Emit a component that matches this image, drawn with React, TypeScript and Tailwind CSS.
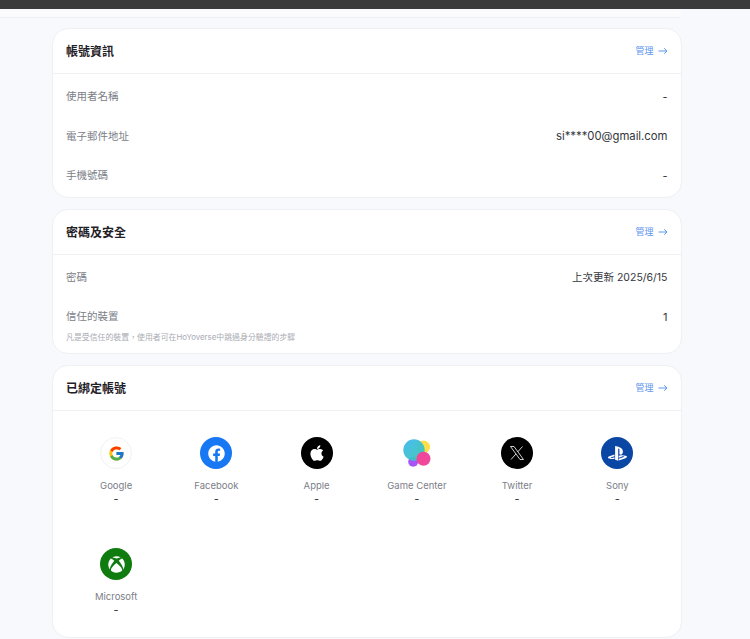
import { FaApple, FaFacebook, FaPlaystation, FaXbox } from "react-icons/fa";
import { FcGoogle } from "react-icons/fc";

function CardHeader({ title }: { title: string }) {
  return (
    <div className="flex h-[45px] items-center justify-between border-b border-[#eef0f4] pl-[13px] pr-[13.5px] pt-[2px]">
      <h2 className="text-[12px] font-bold text-[#1f2126]">{title}</h2>
      <a className="flex -translate-y-[1px] items-center gap-[4px] text-[9px] text-[#5f96ee]">
        管理
        <svg width="10" height="8" viewBox="0 0 10 8" fill="none" stroke="currentColor" strokeWidth="1">
          <path d="M0.5 4H9M6.2 1.3L9 4L6.2 6.7" />
        </svg>
      </a>
    </div>
  );
}

function Row({ label, value, size, hint }: { label: string; value: string; size?: string; hint?: string }) {
  return (
    <div className="pl-[13px] pr-[13.5px]">
      <div className="flex h-[20px] items-center justify-between">
        <span className="text-[10.5px] text-[#7b7e87]">{label}</span>
        <span className={`text-[#33363d] ${size ?? "text-[11px]"}`}>{value}</span>
      </div>
      {hint && <p className="mt-[5px] text-[7.9px] leading-[11px] text-[#a9abb3]">{hint}</p>}
    </div>
  );
}

function GameCenterIcon() {
  return (
    <svg width="32" height="32" viewBox="0 0 32 32">
      <defs>
        <linearGradient id="gcBlue" x1="0" y1="0" x2="1" y2="1">
          <stop offset="0%" stopColor="#3fb8f0" />
          <stop offset="100%" stopColor="#3cc7b4" />
        </linearGradient>
      </defs>
      <circle cx="22.5" cy="10" r="6.5" fill="#fde047" />
      <circle cx="12.2" cy="24.7" r="5" fill="#a855f7" />
      <circle cx="13" cy="13" r="10.7" fill="url(#gcBlue)" fillOpacity="0.95" />
      <circle cx="22.5" cy="21.7" r="7" fill="#f0479a" />
    </svg>
  );
}

function XIcon() {
  return (
    <svg width="32" height="32" viewBox="0 0 32 32" fill="none" stroke="#e5e5e5" strokeWidth="0.9">
      <path d="M9.5 9.5H13L22.5 22.5H19Z" />
      <path d="M21.5 9.5L16.8 14.8M15 16.9L10 22.5" />
    </svg>
  );
}

const ACCOUNTS = [
  { name: "Google", bg: "bg-white border border-[#f1f2f5]", icon: <FcGoogle size={17} /> },
  { name: "Facebook", bg: "bg-[#1877f2]", icon: <FaFacebook size={17} color="#fff" /> },
  { name: "Apple", bg: "bg-black", icon: <FaApple size={18} color="#fff" /> },
  { name: "Game Center", bg: "", icon: <GameCenterIcon /> },
  { name: "Twitter", bg: "bg-black", icon: <XIcon /> },
  { name: "Sony", bg: "bg-[#0a47a5]", icon: <FaPlaystation size={19} color="#fff" /> },
  { name: "Microsoft", bg: "bg-[#107c10]", icon: <FaXbox size={17} color="#fff" /> },
];

export default function App() {
  return (
    <div
      className="h-[639px] overflow-hidden bg-[#f8f9fc]"
      style={{ fontFamily: 'Inter, "Noto Sans CJK TC", sans-serif' }}
    >
      <div className="h-[9px] bg-[#3b3b3b]" />
      <div className="h-[9px] w-[681px] border-b border-[#eef0f4] bg-[#fbfbfd]" />
      <div className="ml-[52px] mt-[10px] flex w-[630px] flex-col gap-[11px]">
        <section className="h-[170px] rounded-[16px] border border-[#eff0f4] bg-white">
          <CardHeader title="帳號資訊" />
          <div className="flex flex-col gap-[19.5px] pt-[13px]">
            <Row label="使用者名稱" value="-" />
            <Row label="電子郵件地址" value="si****00@gmail.com" size="text-[11.3px]" />
            <Row label="手機號碼" value="-" />
          </div>
        </section>

        <section className="h-[145px] rounded-[16px] border border-[#eff0f4] bg-white">
          <CardHeader title="密碼及安全" />
          <div className="flex flex-col gap-[19px] pt-[13px]">
            <Row label="密碼" value="上次更新 2025/6/15" size="text-[10.5px]" />
            <Row
              label="信任的裝置"
              value="1"
              hint="凡是受信任的裝置，使用者可在HoYoverse中跳過身分驗證的步驟"
            />
          </div>
        </section>

        <section className="h-[273px] rounded-[16px] border border-[#eff0f4] bg-white">
          <CardHeader title="已綁定帳號" />
          <div className="grid grid-cols-6 gap-y-[42px] pl-[13px] pr-[13.5px] pt-[26px]">
            {ACCOUNTS.map((a) => (
              <div key={a.name} className="flex flex-col items-center">
                <div className={`flex h-[32px] w-[32px] items-center justify-center rounded-full ${a.bg}`}>
                  {a.icon}
                </div>
                <span className="mt-[11px] text-[9.5px] leading-[12px] text-[#7b7e87]">{a.name}</span>
                <span className="text-[11px] leading-[14px] text-[#33363d]">-</span>
              </div>
            ))}
          </div>
        </section>
      </div>
    </div>
  );
}
